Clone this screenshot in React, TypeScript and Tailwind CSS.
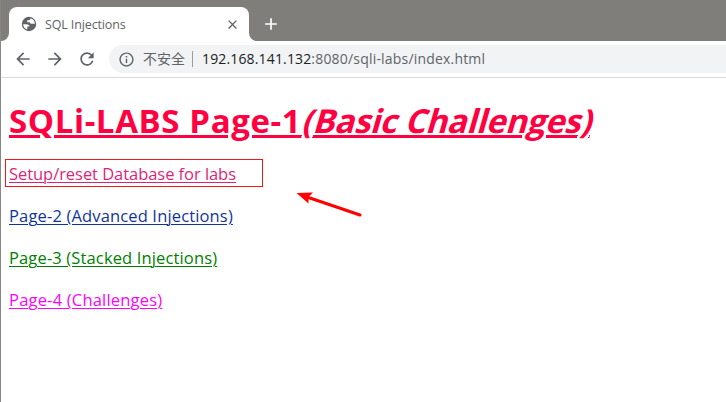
import { MdArrowBack, MdArrowForward, MdRefresh, MdInfoOutline, MdClose, MdAdd } from 'react-icons/md';

function GlobeIcon() {
  return (
    <svg width="16" height="16" viewBox="0 0 16 16" className="shrink-0">
      <circle cx="8" cy="8" r="7.2" fill="#5f6368" />
      <path d="M2.1 8.3 H5.5 Q8.4 8.4 8.5 10.6 H6.3 V13.6 Q2.5 12.4 2.1 8.3 Z" fill="#fff" />
      <path d="M9.5 2.3 Q13.6 3.4 13.9 7.7 H11 Q9.1 7.8 8.8 6.2 H6.2 V4.3 H8.3 Q9.5 4 9.5 2.3 Z" fill="#fff" />
    </svg>
  );
}

const links = [
  { text: 'Setup/reset Database for labs', style: 'text-[#df1f78] tracking-[-0.05px]' },
  { text: 'Page-2 (Advanced Injections)', style: 'text-[#11349c] tracking-[0.15px]' },
  { text: 'Page-3 (Stacked Injections)', style: 'text-[#008000] tracking-[0.14px]' },
  { text: 'Page-4 (Challenges)', style: 'text-[#ff00ff] tracking-[0.2px]' },
];

export default function App() {
  return (
    <div className="relative h-[402px] w-[726px] overflow-hidden border-l border-[#8a8886] bg-white font-['Open_Sans','Noto_Sans_CJK_SC',sans-serif]">
      <header>
        <div className="flex h-[41px] items-end bg-[#807e7b]">
          <div className="h-2 w-2 shrink-0 bg-white"><div className="h-2 w-2 rounded-br-lg bg-[#807e7b]" /></div>
          <div className="flex h-[34px] w-[240px] items-center rounded-t-lg bg-white pr-[9px] pl-3 text-[#5f6368]">
            <GlobeIcon />
            <span className="ml-2 flex-1 pt-0.5 text-[12.5px] tracking-[-0.13px] whitespace-nowrap">SQL Injections</span>
            <MdClose size={15} />
          </div>
          <div className="h-2 w-2 shrink-0 bg-white"><div className="h-2 w-2 rounded-bl-lg bg-[#807e7b]" /></div>
          <div className="flex h-[34px] items-center pl-[4px] text-white"><MdAdd size={20} /></div>
        </div>
        <div className="flex h-[37px] items-start border-b border-[#d9dadb] pt-1 pl-[12px] text-[#5f6368]">
          <div className="flex h-7 items-center gap-[12px]">
            <MdArrowBack size={20} />
            <MdArrowForward size={20} />
            <MdRefresh size={20} />
          </div>
          <div className="ml-[12px] flex h-7 flex-1 items-center rounded-l-full bg-[#f1f3f4] pl-[9px] text-[14px] whitespace-nowrap">
            <MdInfoOutline size={17} />
            <span className="ml-[8px] w-[43px] pb-0.5">不安全</span>
            <span className="ml-[6px] h-4 w-px bg-[#9b9da0]" />
            <span className="ml-[9px] pb-0.5 tracking-[0.15px] text-[#202124]">192.168.141.132</span>
            <span className="pb-0.5 tracking-[0.19px]">:8080/sqli-labs/index.html</span>
          </div>
        </div>
      </header>
      <main className="pl-2 whitespace-nowrap">
        <h1 className="mt-[19px] flex h-12 text-[33px] leading-[48px] font-bold text-[#ff0040]">
          <span className="tracking-[0.62px] underline decoration-[3px] underline-offset-[2px]">SQLi-LABS Page-1</span>
          <span className="origin-[0_75%] -skew-x-[16deg] tracking-[-0.3px] underline decoration-[3px] underline-offset-[2px]">(Basic Challenges)</span>
        </h1>
        <nav className="mt-[17px] flex flex-col items-start gap-[18px] text-[16.5px] leading-6">
          {links.map((link) => (
            <a key={link.text} className={`underline decoration-1 underline-offset-2 ${link.style}`}>{link.text}</a>
          ))}
        </nav>
      </main>
      <div className="absolute top-[159px] left-[4px] h-[28px] w-[258px] border border-[#f01818]" />
      <svg className="absolute top-[186px] left-[291px]" width="74" height="34" viewBox="292 186 74 34">
        <path d="M307 197 L360 215" stroke="#f00" strokeWidth="3" strokeLinecap="round" />
        <path d="M296.5 193 L313 192.5 L308.5 197 L308.5 203.5 Z" fill="#f00" />
      </svg>
    </div>
  );
}
